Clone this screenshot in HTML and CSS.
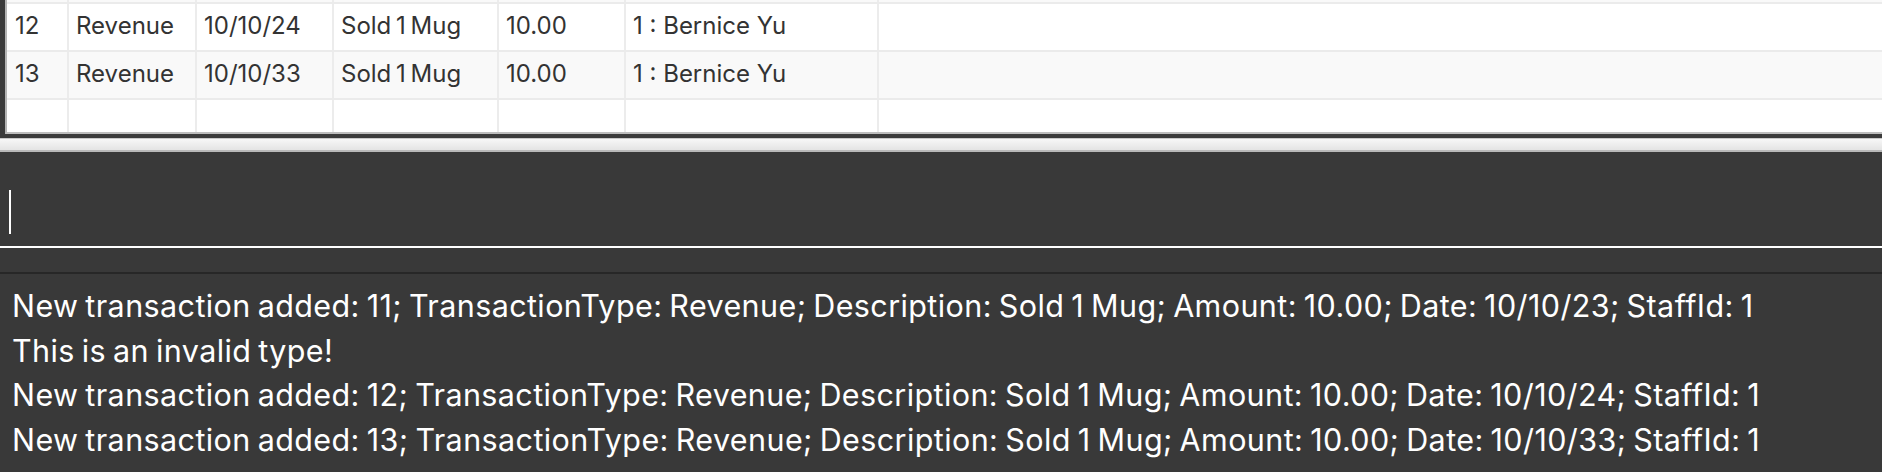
FILE: index.html
```html
<!DOCTYPE html>
<html>
<head>
<meta charset="utf-8">
<link rel="stylesheet" href="styles.css">
</head>
<body>
<div class="app">
  <div class="top-pane">
    <div class="table">
      <div class="row remnant">
        <div class="cell c1"></div><div class="cell c2"></div><div class="cell c3"></div><div class="cell c4"></div><div class="cell c5"></div><div class="cell c6"></div><div class="cell c7"></div>
      </div>
      <div class="row">
        <div class="cell c1">12</div><div class="cell c2">Revenue</div><div class="cell c3">10/10/24</div><div class="cell c4">Sold 1 Mug</div><div class="cell c5">10.00</div><div class="cell c6">1 : Bernice Yu</div><div class="cell c7"></div>
      </div>
      <div class="row odd">
        <div class="cell c1">13</div><div class="cell c2">Revenue</div><div class="cell c3">10/10/33</div><div class="cell c4">Sold 1 Mug</div><div class="cell c5">10.00</div><div class="cell c6">1 : Bernice Yu</div><div class="cell c7"></div>
      </div>
      <div class="row">
        <div class="cell c1"></div><div class="cell c2"></div><div class="cell c3"></div><div class="cell c4"></div><div class="cell c5"></div><div class="cell c6"></div><div class="cell c7"></div>
      </div>
    </div>
  </div>
  <div class="splitter"></div>
  <div class="input-pane"><span class="caret"></span></div>
  <div class="gap"></div>
  <div class="output">
    <div class="line">New transaction added: 11; TransactionType: Revenue; Description: Sold 1 Mug; Amount: 10.00; Date: 10/10/23; StaffId: 1</div>
    <div class="line">This is an invalid type!</div>
    <div class="line">New transaction added: 12; TransactionType: Revenue; Description: Sold 1 Mug; Amount: 10.00; Date: 10/10/24; StaffId: 1</div>
    <div class="line">New transaction added: 13; TransactionType: Revenue; Description: Sold 1 Mug; Amount: 10.00; Date: 10/10/33; StaffId: 1</div>
  </div>
</div>
</body>
</html>
```
FILE: styles.css
```css
html, body {
  margin: 0;
  padding: 0;
  background: #393939;
}
.app {
  width: 1882px;
  height: 472px;
  overflow: hidden;
  background: #393939;
  font-family: Inter, "Noto Sans", sans-serif;
}
.top-pane {
  height: 134px;
  padding: 0 0 4px 5px;
  background: #3b3b3b;
}
.table {
  height: 132px;
  overflow: hidden;
  background: #ffffff;
  border-left: 2px solid #b4b4b4;
  border-bottom: 2px solid #bdbdbd;
}
.row {
  display: grid;
  grid-template-columns: 60px 126px 135px 163px 125px 251px 1fr;
  column-gap: 2px;
  background: #ececec;
  border-bottom: 2px solid #ebebeb;
}
.cell {
  height: 46px;
  background: #ffffff;
  padding-left: 7px;
  font-size: 24px;
  line-height: 44px;
  word-spacing: -2px;
  color: #333333;
  white-space: nowrap;
  overflow: hidden;
}
.row.odd .cell,
.row.remnant .cell {
  background: #f9f9f9;
}
.row.remnant .cell {
  height: 2px;
}
.c1 { padding-left: 8px; }
.c6 { word-spacing: 0; }
.splitter {
  height: 11px;
  border-top: 1px solid #c9c9c9;
  border-bottom: 2px solid #b9b9b9;
  background: linear-gradient(#f7f7f7, #e4e4e4);
}
.input-pane {
  height: 94px;
  border-bottom: 2px solid #ffffff;
  background: #393939;
  display: flex;
  align-items: flex-start;
  padding-left: 9px;
}
.caret {
  display: block;
  width: 2px;
  height: 44px;
  margin-top: 38px;
  background: #ffffff;
}
.gap {
  height: 24px;
  border-bottom: 2px solid #272727;
  background: #393939;
}
.output {
  padding: 10px 0 0 12px;
  color: #ffffff;
  font-size: 30.5px;
  line-height: 44.5px;
  letter-spacing: 0.4px;
  word-spacing: -2px;
  white-space: nowrap;
}
```
